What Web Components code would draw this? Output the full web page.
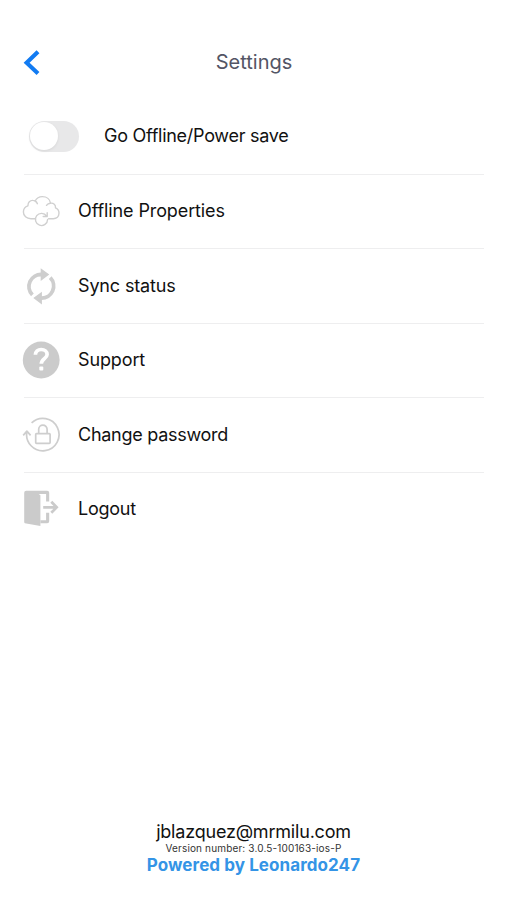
<!DOCTYPE html>
<html lang="en">
<head>
<meta charset="utf-8">
<title>Settings</title>
<style>
html, body { margin: 0; height: 100%; background: #fff; }
</style>
</head>
<body>
<settings-screen></settings-screen>
<script>
const ICONS = {
  cloud: `<g fill="none" stroke="#d0d0d0" stroke-width="1.4" stroke-linecap="round" stroke-linejoin="round">
    <path d="M13.8 27.7H10C5.5 27.7 2.4 24.8 2.4 20.9c0-3 1.8-5.2 4.5-6.1C6.8 11.5 9 9.2 12 9.4c.8 0 1.5.3 2.1.6C15.5 7.3 18.2 5.6 21.3 5.6c4.5 0 7.7 2.7 8.2 6.6 3.1-.3 5.3 1.6 5 4.7 2.2 1 3.5 2.9 3.5 5.2 0 3.3-2.4 5.6-5.7 5.6h-4.7M29.5 12.2c-1.8.1-3.2.9-4 2.1M14.1 10c1.2.6 1.9 1.5 2.3 2.7"/>
    <path d="M25.6 25.1A6.1 6.1 0 1 0 26.6 28.5M26.2 21.8v3.7h-4"/></g>`,
  sync: `<g fill="none" stroke="#cecece" stroke-width="3.8"><path d="M11.4 28.9A12 12 0 0 1 20.5 8.5M29.2 11.7A12 12 0 0 1 20.1 32.1"/></g>
    <path fill="#cecece" d="M19.7 2.3l8.6 6.3-8.6 6.3zM20.9 38.4l-8.6-6.3 8.6-6.3z"/>`,
  help: `<circle cx="20.2" cy="20" r="18.4" fill="#cbcbcb"/>
    <path d="M14.4 14.8c.1-3.4 2.6-5.3 5.8-5.3 3.4 0 5.9 1.9 5.9 4.9 0 4.2-5.8 4.3-5.8 9.4" fill="none" stroke="#fff" stroke-width="3.7"/><rect x="18.3" y="26.5" width="4" height="4" rx="1" fill="#fff"/>`,
  lock: `<g fill="none" stroke="#cecece" stroke-width="1.7" stroke-linejoin="round">
    <path d="M10.6 7.9A16.2 16.2 0 1 1 5.9 16.6M2.2 20.4l3.7-4.3 3.7 4.3"/>
    <rect x="14.7" y="18.6" width="14.4" height="9.7" rx=".8"/><path d="M17.7 18.3v-4a4.2 4.2 0 0 1 8.4 0v4"/></g>`,
  logout: `<path fill="#cbcbcb" d="M3.2 3.8Q3.2 1.8 5.2 1.8H26.2Q28.2 1.8 28.2 3.8V12.6H25.1V4.9H17.7L19.4 6.3V37L3.9 34.2Q3.2 34 3.2 33z"/>
    <path fill="#cbcbcb" d="M19.4 31.3h5.7v-7.5h3.1v8.5q0 2-2 2h-6.8z"/>
    <path d="M22.2 18.3H35M30.3 12.8l5.4 5.5-5.4 5.5" fill="none" stroke="#cbcbcb" stroke-width="2.7"/>`
};

class AppHeader extends HTMLElement {
  constructor() {
    super();
    this.attachShadow({ mode: 'open' }).innerHTML = `<style>
      :host { display: grid; grid-template-columns: 40px 1fr 40px; align-items: center; height: 52px; padding: 36px 11px 12px 11px; box-sizing: content-box; }
      svg { display: block; }
      h1 { margin: 0; padding-left: 1px; text-align: center; font-size: 20px; font-weight: 400; line-height: 28px; color: #535565; }
      </style><svg width="40" height="40" viewBox="0 0 40 40" role="img" aria-label="Back"><path d="M27 9.7L15.6 20.7 27 31.5" fill="none" stroke="#127bf2" stroke-width="4.1"/></svg><h1><slot></slot></h1><span></span>`;
  }
}
customElements.define('app-header', AppHeader);

class ToggleSwitch extends HTMLElement {
  constructor() {
    super();
    this.attachShadow({ mode: 'open' }).innerHTML = `<style>
      :host { display: flex; align-items: center; box-sizing: border-box; width: 50px; height: 31px; margin-bottom: 1px; border-radius: 16px; padding: 1px; background: #e8e8e9; }
      span { width: 28px; height: 28px; border-radius: 50%; background: #fff; box-shadow: 0 1px 3px rgba(0,0,0,.08); }
      </style><span></span>`;
  }
}
customElements.define('toggle-switch', ToggleSwitch);

class MenuIcon extends HTMLElement {
  connectedCallback() {
    if (this.shadowRoot) return;
    this.attachShadow({ mode: 'open' }).innerHTML = `<style>:host { display: block; width: 40px; height: 40px; } svg { display: block; }</style>
      <svg width="40" height="40" viewBox="0 0 40 40" aria-hidden="true">${ICONS[this.getAttribute('name')]}</svg>`;
  }
}
customElements.define('menu-icon', MenuIcon);

class SettingsRow extends HTMLElement {
  constructor() {
    super();
    this.attachShadow({ mode: 'open' }).innerHTML = `<style>
      :host { display: flex; align-items: center; box-sizing: border-box; height: 74.5px; }
      :host { border-bottom: 1.5px solid #eeeeef; }
      :host(:last-of-type) { border-color: transparent; }
      .lead { flex: none; width: 57px; margin-left: -3px; }
      :host([wide]) .lead { width: 75px; margin-left: 5px; }
      :host([wide]) .label { padding-bottom: 1px; }
      .label { font-size: 18px; line-height: 24px; color: #111; letter-spacing: var(--track, 0); white-space: nowrap; }
      </style><div class="lead"><slot name="icon"></slot></div><div class="label"><slot></slot></div>`;
  }
}
customElements.define('settings-row', SettingsRow);

class AccountFooter extends HTMLElement {
  constructor() {
    super();
    this.attachShadow({ mode: 'open' }).innerHTML = `<style>
      :host { display: flex; flex-direction: column; align-items: center; margin-top: auto; padding-bottom: 24px; white-space: nowrap; }
      .mail { font-size: 18px; line-height: 22px; color: #111; letter-spacing: -.2px; }
      .version { font-size: 10px; line-height: 11px; padding-bottom: 1px; color: #333; letter-spacing: .15px; }
      .brand { font-size: 17px; line-height: 21px; font-weight: 700; color: #3494e6; letter-spacing: .08px; }
      </style><div class="mail"><slot name="mail"></slot></div><div class="version"><slot name="version"></slot></div><div class="brand"><slot name="brand"></slot></div>`;
  }
}
customElements.define('account-footer', AccountFooter);

class SettingsScreen extends HTMLElement {
  constructor() {
    super();
    this.attachShadow({ mode: 'open' }).innerHTML = `<style>
      :host { display: flex; flex-direction: column; height: 100vh; overflow: hidden; background: #fff; font-family: Inter, "Liberation Sans", sans-serif; }
      main { padding: 0 23px 0 24px; }
      </style>
      <app-header>Settings</app-header>
      <main>
        <settings-row wide style="--track:-.27px"><toggle-switch slot="icon"></toggle-switch>Go Offline/Power save</settings-row>
        <settings-row style="--track:-.11px"><menu-icon slot="icon" name="cloud"></menu-icon>Offline Properties</settings-row>
        <settings-row style="--track:-.15px"><menu-icon slot="icon" name="sync"></menu-icon>Sync status</settings-row>
        <settings-row style="--track:-.12px"><menu-icon slot="icon" name="help"></menu-icon>Support</settings-row>
        <settings-row style="--track:-.27px"><menu-icon slot="icon" name="lock"></menu-icon>Change password</settings-row>
        <settings-row style="--track:-.25px"><menu-icon slot="icon" name="logout"></menu-icon>Logout</settings-row>
      </main>
      <account-footer><span slot="mail">jblazquez@mrmilu.com</span><span slot="version">Version number: 3.0.5-100163-ios-P</span><span slot="brand">Powered by Leonardo247</span></account-footer>`;
  }
}
customElements.define('settings-screen', SettingsScreen);
</script>
</body>
</html>
